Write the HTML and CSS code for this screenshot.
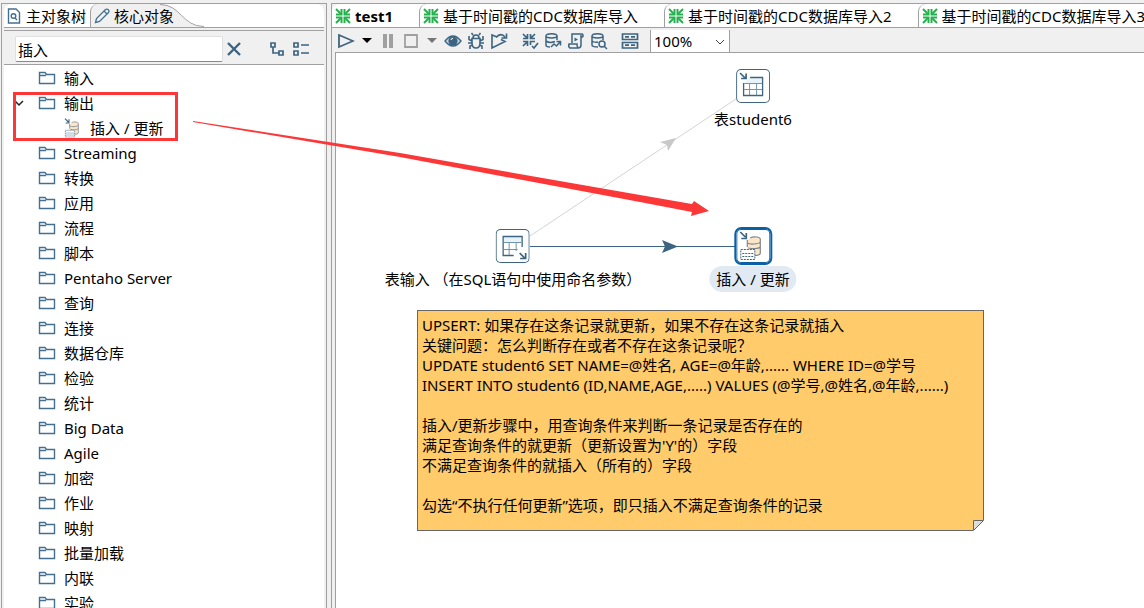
FILE: index.html
```
<!DOCTYPE html>
<html lang="zh-CN">

<head>
    <meta charset="utf-8">
    <title>test1</title>
    <link rel="stylesheet" href="styles.css">
</head>

<body>
    <!-- shared icons -->
    <svg class="icon-defs" aria-hidden="true">
        <symbol id="folder" viewBox="0 0 18 14">
            <path d="M1.500 12.500V1.500H7L8.500 3.500H16.500V12.500Z M1.500 4.500H8" fill="none" stroke="#44708f" stroke-width="1.400"/>
        </symbol>
        <symbol id="merge" viewBox="0 0 16 16">
            <path d="M1 1L5 5M15 1L11 5M1 15L5 11M15 15L11 11" stroke="currentColor" stroke-width="2"/>
            <path d="M1 6.500H6.500V1M9.500 1V6.500H15M1 9.500H6.500V15M9.500 15V9.500H15" fill="none" stroke="currentColor" stroke-width="2"/>
            <path d="M3 7L7 3V7ZM13 7L9 3V7ZM3 9L7 13V9ZM13 9L9 13V9Z" fill="currentColor"/>
        </symbol>
        <symbol id="upsert" viewBox="0 0 34 34">
            <path d="M11 12V25C11 27 24 27 24 25V10C23 7 13 7 11 12Z" fill="#fbe6c8"/>
            <path d="M14 9C17 7 24 8 24 10V24C24 26 21 26.500 18 26.500M11 14C13 15.500 22 15.500 24 13M12 19C16 20 22 20 24 18M11 11V18" fill="none" stroke="#7d8790" stroke-width="1.200"/>
            <path d="M4.500 20.500H18.500V30.500H4.500Z" fill="#fff" stroke="#3d6480" stroke-dasharray="2 1"/>
            <path d="M6 24.500H17M6 27.500H17" stroke="#3d6480" stroke-dasharray="2 1"/>
            <path d="M4 3L9 8M10 4V9.500H5" fill="none" stroke="#3d6480" stroke-width="1.700"/>
        </symbol>
    </svg>

    <aside class="panel sidebar">
        <div class="tabs" role="tablist">
            <button class="tab" role="tab">
                <svg class="tab-icon" width="14" height="16" viewBox="0 0 14 16" fill="none" stroke="#44708f" stroke-width="1.400">
                    <path d="M1.500 1H9L12.500 4.500V15H1.500Z"/>
                    <circle cx="6.500" cy="8" r="2.300"/>
                    <path d="M8 10L10 12"/>
                </svg>
                主对象树
            </button>
            <button class="tab active" role="tab" aria-selected="true">
                <svg class="tab-icon" width="16" height="16" viewBox="0 0 16 16" fill="none" stroke="#44708f" stroke-width="1.300">
                    <path d="M1.500 14.500L2.500 10.500L11.500 1.500Q13 .5 14.300 1.800Q15.500 3 14.500 4.500L5.500 13.500Z"/>
                    <path d="M10 3L13 6"/>
                </svg>
                核心对象
            </button>
            <svg class="tab-curve" width="44" height="23" viewBox="0 0 44 23">
                <path d="M0 0C20 0 22 22.500 42 22.500H44V23H0Z" fill="#f0f0f0"/>
                <path d="M0 .5C21 .5 22 22.500 44 22.500" fill="none" stroke="#a0a0a0"/>
            </svg>
        </div>
        <div class="search">
            <input class="search-input" type="text" value="插入" aria-label="搜索">
            <button class="icon-button" aria-label="清除">
                <svg width="16" height="16" viewBox="0 0 16 16"><path d="M2 2L14 14M14 2L2 14" stroke="#3d6480" stroke-width="2.400"/></svg>
            </button>
            <div class="search-tools">
                <button class="icon-button" aria-label="展开">
                    <svg width="16" height="16" viewBox="0 0 16 16" fill="none" stroke="#3d6480" stroke-width="1.700"><path d="M2 2H6V6H2ZM10 10H14V14H10ZM4 6V12H10"/></svg>
                </button>
                <button class="icon-button" aria-label="折叠">
                    <svg width="18" height="16" viewBox="0 0 18 16" fill="none" stroke="#3d6480" stroke-width="1.700"><path d="M2 2H6V6H2ZM2 10H6V14H2ZM9 4H17M9 12H17"/></svg>
                </button>
            </div>
        </div>
        <ul class="tree">
            <li class="row"><svg class="folder"><use href="#folder"/></svg>输入</li>
            <li class="row open"><svg class="chevron" viewBox="0 0 10 8"><path d="M1 2L5 6L9 2" fill="none" stroke="#222" stroke-width="1.500"/></svg><svg class="folder"><use href="#folder"/></svg>输出</li>
            <li class="row child"><svg class="step-icon" viewBox="3 2 23 30"><use href="#upsert" width="34" height="34"/></svg>插入 / 更新</li>
            <li class="row"><svg class="folder"><use href="#folder"/></svg>Streaming</li>
            <li class="row"><svg class="folder"><use href="#folder"/></svg>转换</li>
            <li class="row"><svg class="folder"><use href="#folder"/></svg>应用</li>
            <li class="row"><svg class="folder"><use href="#folder"/></svg>流程</li>
            <li class="row"><svg class="folder"><use href="#folder"/></svg>脚本</li>
            <li class="row"><svg class="folder"><use href="#folder"/></svg>Pentaho Server</li>
            <li class="row"><svg class="folder"><use href="#folder"/></svg>查询</li>
            <li class="row"><svg class="folder"><use href="#folder"/></svg>连接</li>
            <li class="row"><svg class="folder"><use href="#folder"/></svg>数据仓库</li>
            <li class="row"><svg class="folder"><use href="#folder"/></svg>检验</li>
            <li class="row"><svg class="folder"><use href="#folder"/></svg>统计</li>
            <li class="row"><svg class="folder"><use href="#folder"/></svg>Big Data</li>
            <li class="row"><svg class="folder"><use href="#folder"/></svg>Agile</li>
            <li class="row"><svg class="folder"><use href="#folder"/></svg>加密</li>
            <li class="row"><svg class="folder"><use href="#folder"/></svg>作业</li>
            <li class="row"><svg class="folder"><use href="#folder"/></svg>映射</li>
            <li class="row"><svg class="folder"><use href="#folder"/></svg>批量加载</li>
            <li class="row"><svg class="folder"><use href="#folder"/></svg>内联</li>
            <li class="row"><svg class="folder"><use href="#folder"/></svg>实验</li>
        </ul>
    </aside>

    <main class="panel editor">
        <div class="tabs" role="tablist">
            <button class="tab file-tab current" role="tab" aria-selected="true"><svg class="merge"><use href="#merge"/></svg>test1</button>
            <button class="tab file-tab" role="tab"><svg class="merge"><use href="#merge"/></svg>基于时间戳的CDC数据库导入</button>
            <button class="tab file-tab" role="tab"><svg class="merge"><use href="#merge"/></svg>基于时间戳的CDC数据库导入2</button>
            <button class="tab file-tab" role="tab"><svg class="merge"><use href="#merge"/></svg>基于时间戳的CDC数据库导入3</button>
        </div>

        <div class="toolbar">
            <button class="icon-button" aria-label="运行"><svg width="18" height="18" viewBox="0 0 18 18"><path d="M2 3L16 9L2 15Z" fill="none" stroke="#3d6480" stroke-width="1.800"/></svg></button>
            <button class="icon-button arrow" aria-label="运行选项"><svg width="10" height="6" viewBox="0 0 10 6"><path d="M0 0H10L5 5Z" fill="#000"/></svg></button>
            <button class="icon-button" aria-label="暂停"><svg width="18" height="18" viewBox="0 0 18 18"><path d="M4 2H8V16H4ZM10 2H14V16H10Z" fill="#a0a0a0"/></svg></button>
            <button class="icon-button" aria-label="停止"><svg width="18" height="18" viewBox="0 0 18 18"><path d="M3 3H15V15H3Z" fill="none" stroke="#a0a0a0" stroke-width="1.800"/></svg></button>
            <button class="icon-button arrow" aria-label="停止选项"><svg width="10" height="6" viewBox="0 0 10 6"><path d="M0 0H10L5 5Z" fill="#777"/></svg></button>
            <button class="icon-button" aria-label="预览"><svg width="18" height="18" viewBox="0 0 18 18"><path d="M1 9Q9-1 17 9Q9 19 1 9Z" fill="#c9d6df" stroke="#3d6480" stroke-width="1.300"/><circle cx="9" cy="9" r="4.600" fill="#3d6480"/><path d="M7 8Q7 6.500 9 6.300" fill="none" stroke="#fff"/></svg></button>
            <button class="icon-button" aria-label="调试"><svg width="18" height="18" viewBox="0 0 18 18" fill="none" stroke="#3d6480" stroke-width="1.600"><path d="M5 6.500H13V11Q13 16 9 16Q5 16 5 11ZM6 6Q6 3 9 3Q12 3 12 6M6 3L4.500 1M12 3L13.500 1M5 9L2 7.500V4M13 9L16 7.500V4M5 11H1M13 11H17M5.500 13L3 14V17M12.500 13L15 14V17"/></svg></button>
            <button class="icon-button" aria-label="重放"><svg width="18" height="18" viewBox="0 0 18 18" fill="none" stroke="#3d6480" stroke-width="1.600"><path d="M7 5L2 3V16L15 9.500L11 7.500M6 5.500Q11 0 15 5M16.500 1.500V6H11.500"/></svg></button>
            <button class="icon-button check" aria-label="校验"><svg width="18" height="18" viewBox="0 0 18 18" fill="none" stroke="#3d6480" stroke-width="1.700"><path d="M2 2L6 6M14 2L10 6M2 14L6 10M2 6.500H6.500V2M9.500 2V6.500H14M2 9.500H6.500V14M9.500 13V9.500H14M11 14L13 16L17 11"/></svg></button>
            <button class="icon-button" aria-label="影响分析"><svg width="18" height="18" viewBox="0 0 18 18" fill="none" stroke="#3d6480" stroke-width="1.500"><path d="M2 4C2 1 13 1 13 4C13 6.500 2 6.500 2 4V13Q2 15 6 15M13 4V8M2 9Q6 11.500 11 9.500M7 15L10 12L12.500 14L16 10M12.500 9.500H16.500V13.500"/></svg></button>
            <button class="icon-button" aria-label="SQL"><svg width="18" height="18" viewBox="0 0 18 18" fill="none" stroke="#3d6480" stroke-width="1.500"><path d="M5 11V2H15Q17 3 15.500 5H14V13Q14 16 11 16H3Q1 15 2 12H10Q10 16 12 16M14 5V3"/><path d="M7.500 5.500L11 7.500L7.500 9.500Z" fill="#3d6480" stroke="none"/></svg></button>
            <button class="icon-button" aria-label="浏览数据库"><svg width="18" height="18" viewBox="0 0 18 18" fill="none" stroke="#3d6480" stroke-width="1.500"><path d="M2 4C2 1 13 1 13 4C13 6.500 2 6.500 2 4V13Q2 15 8 15M13 4V8M2 9Q5 11 8 10M14.500 14.500L17 17"/><circle cx="12" cy="12" r="3"/></svg></button>
            <button class="icon-button results" aria-label="结果"><svg width="18" height="18" viewBox="0 0 18 18" fill="none" stroke="#3d6480" stroke-width="1.700"><path d="M1.500 2H16.500V7.500H1.500ZM1.500 10.500H16.500V16H1.500ZM4 4.800H8M10 4.800H14M4 13.200H8M10 13.200H14"/></svg></button>
            <div class="zoom">
                <select class="zoom-select" aria-label="缩放">
                    <option>100%</option>
                </select>
                <svg class="zoom-arrow" viewBox="0 0 10 6"><path d="M1 1L5 5L9 1" fill="none" stroke="#444"/></svg>
            </div>
        </div>

        <div class="canvas">
            <svg class="hops">
                <path d="M194 183L400 46" stroke="#d4d4d4"/>
                <path d="M340 85L324 89L331 92L332 98Z" fill="#c8c8c8"/>
                <path d="M194 193.500H400" stroke="#3d6480"/>
                <path d="M342 193.500L326 187L329 193.500L326 200Z" fill="#3d6480"/>
            </svg>

            <div class="step table-output">
                <div class="step-box">
                    <svg width="34" height="34" viewBox="0 0 34 34" fill="none" stroke="#3d6480">
                        <path d="M8 14L14 8H26V14Z" fill="#e8f3fa" stroke="none"/>
                        <path d="M14 8.500H26.500V26.500H7.500V14" stroke-width="1.300"/>
                        <path d="M8 14.500H26M8 20.500H26M13.500 14V26M20.500 14V26" stroke="#7394a9"/>
                        <path d="M4 4L9 9M10 4.500V9.500H5" stroke-width="1.700"/>
                    </svg>
                </div>
                <div class="step-label">表student6</div>
            </div>

            <div class="step table-input">
                <div class="step-box">
                    <svg width="34" height="34" viewBox="0 0 34 34" fill="none" stroke="#3d6480">
                        <path d="M8 8H26V13H8Z" fill="#e8f3fa" stroke="none"/>
                        <path d="M18 26.500H7.500V7.500H26.500V18" stroke-width="1.300"/>
                        <path d="M8 13.500H26M8 20.500H22M13.500 14V26M20.500 14V22" stroke="#7394a9"/>
                        <path d="M24 24L29 29M30 24V29.500H24.500" stroke-width="1.700"/>
                    </svg>
                </div>
                <div class="step-label">表输入 （在SQL语句中使用命名参数）</div>
            </div>

            <div class="step upsert selected">
                <div class="step-box"><svg width="34" height="34"><use href="#upsert"/></svg></div>
                <div class="step-label">插入 / 更新</div>
            </div>

            <div class="note">
                <p>UPSERT: 如果存在这条记录就更新，如果不存在这条记录就插入</p>
                <p>关键问题：怎么判断存在或者不存在这条记录呢？</p>
                <p>UPDATE student6 SET NAME=@姓名, AGE=@年龄,...... WHERE ID=@学号</p>
                <p>INSERT INTO student6 (ID,NAME,AGE,.....) VALUES (@学号,@姓名,@年龄,......)</p>
                <br>
                <p>插入/更新步骤中，用查询条件来判断一条记录是否存在的</p>
                <p>满足查询条件的就更新（更新设置为'Y'的）字段</p>
                <p>不满足查询条件的就插入（所有的）字段</p>
                <br>
                <p>勾选“不执行任何更新”选项，即只插入不满足查询条件的记录</p>
                <svg class="fold" viewBox="0 0 11 11"><path d="M0 0H11V11H0Z" fill="#fff"/><path d="M.5 10.500V.5H10.500Z" fill="#dcdcdc" stroke="#666"/></svg>
            </div>
        </div>
    </main>

    <!-- red marks over the window -->
    <svg class="marks" aria-hidden="true">
        <rect x="14.500" y="93.500" width="162" height="46" fill="none" stroke="#fb3738" stroke-width="3"/>
        <path d="M193 121L400 153L640 195L692 204L694 201L709 211L691 216L692 212L640 202L400 157L193 122Z" fill="#fb3738"/>
    </svg>
</body>

</html>
```

FILE: styles.css
```
* {
    box-sizing: border-box;
}

body {
    margin: 0;
    padding: 3px 0 0 1px;
    height: 100vh;
    display: flex;
    gap: 4px;
    overflow: hidden;

    background-color: #f0f0f0;
    color: #000;
    font-family: "Noto Sans", "Noto Sans CJK SC", sans-serif;
    font-size: 15px;
    line-height: 20px;
}

button, input, select {
    font: inherit;
    color: inherit;
}

button {
    border: none;
    padding: 0;
    background: none;
}

.icon-defs {
    position: absolute;
    width: 0;
    height: 0;
}

.panel {
    display: flex;
    flex-direction: column;
    border: 1px solid #a0a0a0;
    border-bottom: none;
}

.sidebar {
    flex: 0 0 326px;
    padding: 0 2px;
}

.editor {
    flex: 1;
    min-width: 0;
    border-right: none;
}

/* tabs */

.tabs {
    display: flex;
    flex-shrink: 0;
    height: 24px;
    overflow: hidden;

    background-color: #fff;
    border-bottom: 1px solid #a0a0a0;
    border-radius: 8px 8px 0 0;
}

.editor .tabs {
    border-top-right-radius: 0;
}

.tab {
    display: flex;
    align-items: center;
    gap: 5px;
    flex-shrink: 0;
    padding-left: 3px;
    white-space: nowrap;
}

.sidebar .tab {
    width: 86px;
}

/* the label runs over the start of the curve */
.sidebar .tab.active {
    position: relative;
    z-index: 1;
    width: 70px;
    gap: 4px;
    background-color: #f0f0f0;
    border-left: 1px solid #a0a0a0;
    border-top-left-radius: 8px;
}

.tab-icon, .tab-curve {
    flex-shrink: 0;
}

.file-tab {
    gap: 4px;
    padding: 0 26px 0 3px;
    border-left: 1px solid #a0a0a0;
    border-top-left-radius: 8px;
}

.file-tab.current {
    border-left: none;
    font-weight: bold;
}

.merge {
    width: 16px;
    height: 16px;
    color: #22b14c;
}

.icon-button {
    display: flex;
    align-items: center;
    justify-content: center;
}

/* search */

.search {
    display: flex;
    align-items: center;
    flex-shrink: 0;
    height: 37px;
    padding: 5px 3px 0 11px;
    border-bottom: 1px solid #a0a0a0;
    background: linear-gradient(#a0a0a0, #a0a0a0) 0 2px / 100% 1px no-repeat;
}

.search-input {
    width: 208px;
    height: 26px;
    padding: 1px 2px 0;
    border: 1px solid #e0e0e0;
    border-bottom-color: #888;
    border-radius: 2px;
    background-color: #fff;
}

.search .icon-button {
    margin-left: 3px;
}

.search-tools {
    display: flex;
    gap: 4px;
    margin-left: 24px;
}

/* tree */

.tree {
    flex: 1;
    min-height: 0;
    margin: 0;
    padding: 0 0 0 34px;
    list-style: none;
    overflow: hidden;
    background-color: #fff;
}

.row {
    display: flex;
    align-items: center;
    gap: 8px;
    height: 25px;
}

.row.open {
    margin-left: -24px;
}

.row.open .folder {
    margin-left: 6px;
}

.row.child {
    padding-left: 25px;
    gap: 9px;
}

.folder {
    width: 18px;
    height: 14px;
}

.chevron {
    width: 10px;
    height: 8px;
}

.step-icon {
    width: 18px;
    height: 20px;
}

/* toolbar */

.toolbar {
    display: flex;
    align-items: center;
    flex-shrink: 0;
    gap: 5px;
    height: 24px;
    padding: 2px 0 0 5px;
}

.arrow {
    width: 14px;
}

.check {
    margin-left: 8px;
}

.results {
    margin-left: 8px;
}

.zoom {
    position: relative;
    width: 80px;
    height: 22px;
    margin-left: 6px;
}

.zoom-select {
    width: 100%;
    height: 100%;
    padding: 0 3px;
    appearance: none;
    border: 1px solid #a0a0a0;
    border-width: 0 1px;
    border-radius: 0;
    background-color: #fff;
}

.zoom-arrow {
    position: absolute;
    top: 9px;
    right: 5px;
    width: 10px;
    height: 6px;
    pointer-events: none;
}

/* canvas */

.canvas {
    position: relative;
    flex: 1;
    min-height: 0;
    margin-left: 3px;
    overflow: hidden;
    border: 1px solid #a0a0a0;
    border-width: 1px 0 0 1px;
    background-color: #fff;
}

.hops {
    position: absolute;
    top: 0;
    left: 0;
    width: 100%;
    height: 100%;
}

.step {
    position: absolute;
    display: flex;
    flex-direction: column;
    align-items: center;
    gap: 3px;
    transform: translateX(-50%);
    white-space: nowrap;
}

.table-output {
    left: 417px;
    top: 16px;
}

.table-input {
    left: 177px;
    top: 176px;
}

.upsert {
    left: 417px;
    top: 176px;
}

.step-box {
    display: flex;
    width: 34px;
    height: 34px;
    border-radius: 5px;
    background-color: #fff;
    box-shadow: inset 0 0 0 1px #3d6480;
}

.selected .step-box {
    box-shadow: 0 0 0 2px #0b5fa5, inset 0 0 0 1px #0b5fa5;
}

.step-label {
    padding: 3px 7px;
    border-radius: 13px;
}

.selected .step-label {
    background-color: #e1eaf3;
}

.note {
    position: absolute;
    left: 81px;
    top: 257px;
    width: 567px;
    padding: 4px 4px 15px;
    border: 1px solid #666;
    background-color: #ffcb6b;
    white-space: nowrap;
}

.note p {
    margin: 0;
}

.fold {
    position: absolute;
    right: -1px;
    bottom: -1px;
    width: 11px;
    height: 11px;
}

.marks {
    position: absolute;
    top: 0;
    left: 0;
    width: 100%;
    height: 100%;
    pointer-events: none;
}
```
